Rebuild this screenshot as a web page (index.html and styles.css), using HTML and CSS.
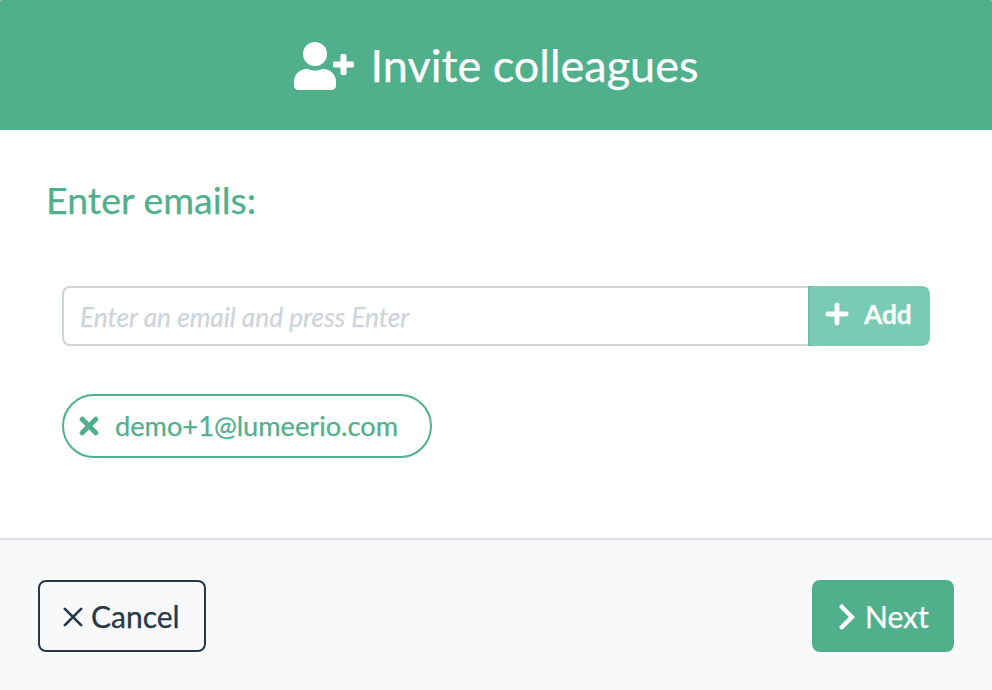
FILE: index.html
```
<!DOCTYPE html>
<html lang="en">
    <head>
        <meta charset="utf-8">
        <title>Invite colleagues</title>
        <link rel="stylesheet" href="styles.css">
    </head>
    <body>
        <div class="modal">
            <div class="modal-header">
                <svg class="icon-user" viewBox="0 0 60 48" fill="currentColor">
                    <circle cx="21" cy="12" r="12"/>
                    <path d="M12.600 27h1.600c4.300 2 9.300 2 13.600 0h1.600C36.400 27 42 32.600 42 39.600v3.900c0 2.500-2 4.500-4.500 4.500h-33C2 48 0 46 0 43.500v-3.900C0 32.600 5.600 27 12.600 27z"/>
                    <path d="M48 12h3c.8 0 1.500.7 1.500 1.500v6h6c.8 0 1.500.7 1.500 1.500v3c0 .8-.7 1.500-1.500 1.500h-6v6c0 .8-.7 1.500-1.500 1.500h-3c-.8 0-1.500-.7-1.500-1.500v-6h-6c-.8 0-1.500-.7-1.500-1.500v-3c0-.8.7-1.500 1.500-1.500h6v-6c0-.8.7-1.500 1.500-1.500z"/>
                </svg>
                <h1 class="title">Invite colleagues</h1>
            </div>
            <div class="modal-body">
                <h2 class="subtitle">Enter emails:</h2>
                <div class="input-group">
                    <input class="email-input" type="text" placeholder="Enter an email and press Enter">
                    <button class="btn-add" type="button">
                        <svg class="icon-plus" viewBox="0 0 24 24" stroke="currentColor" stroke-width="4.800" stroke-linecap="round">
                            <path d="M12 2.800v18.400M2.800 12h18.400"/>
                        </svg>
                        <span>Add</span>
                    </button>
                </div>
                <div class="email-chip">
                    <svg class="icon-remove" viewBox="0 0 20 20" stroke="currentColor" stroke-width="5" stroke-linecap="round">
                        <path d="M3.200 3.200l13.600 13.600M16.800 3.200L3.200 16.800"/>
                    </svg>
                    <span class="email">demo+1@lumeerio.com</span>
                </div>
            </div>
            <div class="modal-footer">
                <button class="btn btn-cancel" type="button">
                    <svg class="icon-times" viewBox="0 0 20 20" stroke="currentColor" stroke-width="2.700" stroke-linecap="round">
                        <path d="M1.900 1.900l16.200 16.200M18.100 1.900L1.900 18.100"/>
                    </svg>
                    <span>Cancel</span>
                </button>
                <button class="btn btn-next" type="button">
                    <svg class="icon-chevron" viewBox="0 0 16 26" stroke="currentColor" stroke-width="4.400" stroke-linecap="round" fill="none">
                        <path d="M2.700 2.700L13 13L2.700 23.300"/>
                    </svg>
                    <span>Next</span>
                </button>
            </div>
        </div>
    </body>
</html>
```
FILE: styles.css
```
* {
    box-sizing: border-box;
}
body {
    margin: 0;
    background-color: #ababa6;
    font-family: Lato, sans-serif;
    -webkit-text-stroke: 0.25px;
}
button, input {
    font-family: inherit;
    margin: 0;
    -webkit-text-stroke: 0.25px;
}
svg {
    flex: none;
}
.modal {
    display: flex;
    flex-direction: column;
    height: 690px;
    background-color: white;
    border-radius: 2px 2px 0 0;
    overflow: hidden;
}
.modal-header {
    display: flex;
    align-items: center;
    justify-content: center;
    height: 130px;
    padding-top: 2px;
    background-color: #51b08c;
    color: white;
}
.icon-user {
    width: 60px;
    height: 48px;
    margin-right: 17px;
}
.title {
    margin: 0;
    padding-bottom: 2px;
    font-size: 45px;
    font-weight: 400;
    line-height: 56px;
}
.modal-body {
    flex: 1;
    padding: 46px 62px 0;
}
.subtitle {
    margin: 0 0 62px -16px;
    font-size: 37.5px;
    font-weight: 400;
    line-height: 48px;
    color: #51b08c;
}
.input-group {
    display: flex;
    height: 60px;
}
.email-input {
    flex: 1;
    padding: 1px 16px 0;
    border: 2px solid #ced4da;
    border-right: 0;
    border-radius: 8px 0 0 8px;
    font-size: 26.25px;
}
.email-input::placeholder {
    color: #ced4da;
    font-style: italic;
}
.btn-add {
    display: flex;
    align-items: center;
    gap: 15px;
    width: 122px;
    padding: 0 0 4px 15px;
    border: 0;
    border-left: 2px solid #6bc0a4;
    border-radius: 0 8px 8px 0;
    background-color: #7acbb3;
    color: white;
    font-size: 26.25px;
    font-weight: 700;
}
.icon-plus {
    width: 24px;
    height: 24px;
}
.email-chip {
    display: flex;
    align-items: center;
    width: 370px;
    height: 64px;
    margin-top: 48px;
    padding-left: 15px;
    border: 2px solid #51b08c;
    border-radius: 32px;
    color: #51b08c;
    font-size: 27.2px;
}
.email {
    padding-bottom: 2px;
}
.icon-remove {
    width: 20px;
    height: 20px;
    margin-right: 16px;
}
.modal-footer {
    display: flex;
    justify-content: space-between;
    height: 152px;
    padding: 40px 38px;
    border-top: 2px solid #dee2e6;
    background-color: #f8f9fb;
}
.btn {
    display: flex;
    align-items: center;
    height: 72px;
    padding: 0 0 0 23px;
    border: 2px solid #273849;
    border-radius: 8px;
    font-size: 30px;
}
.btn-cancel {
    width: 168px;
    background-color: transparent;
    color: #273849;
}
.btn-next {
    width: 142px;
    padding-left: 25px;
    border-color: #51b08c;
    background-color: #51b08c;
    color: white;
}
.icon-times {
    width: 20px;
    height: 20px;
    margin: 1px 8px 0 0;
}
.icon-chevron {
    width: 16px;
    height: 26px;
    margin: 1px 10px 0 0;
}
```
